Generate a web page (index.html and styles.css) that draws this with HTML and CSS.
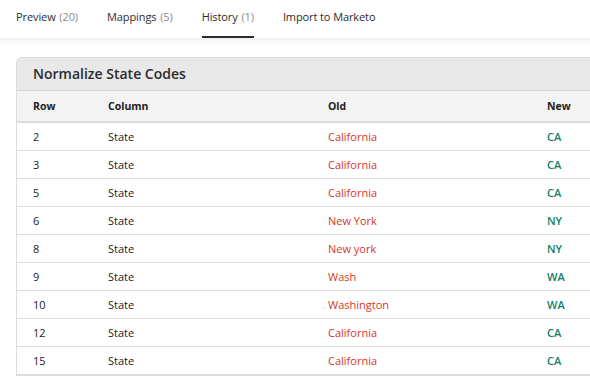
FILE: index.html
```html
<!DOCTYPE html>
<html>
<head>
<meta charset="utf-8">
<link rel="stylesheet" href="styles.css">
</head>
<body>
<nav class="tabs">
  <div class="tab">Preview <span class="count">(20)</span></div>
  <div class="tab">Mappings <span class="count">(5)</span></div>
  <div class="tab active">History <span class="count">(1)</span></div>
  <div class="tab">Import to Marketo</div>
</nav>
<main class="content">
  <section class="card">
    <h2 class="card-title">Normalize State Codes</h2>
    <table class="grid">
      <thead>
        <tr><th class="c-row">Row</th><th class="c-col">Column</th><th class="c-old">Old</th><th class="c-new">New</th></tr>
      </thead>
      <tbody>
        <tr><td>2</td><td>State</td><td class="old">California</td><td class="new">CA</td></tr>
        <tr><td>3</td><td>State</td><td class="old">California</td><td class="new">CA</td></tr>
        <tr><td>5</td><td>State</td><td class="old">California</td><td class="new">CA</td></tr>
        <tr><td>6</td><td>State</td><td class="old">New York</td><td class="new">NY</td></tr>
        <tr><td>8</td><td>State</td><td class="old">New york</td><td class="new">NY</td></tr>
        <tr><td>9</td><td>State</td><td class="old">Wash</td><td class="new">WA</td></tr>
        <tr><td>10</td><td>State</td><td class="old">Washington</td><td class="new">WA</td></tr>
        <tr><td>12</td><td>State</td><td class="old">California</td><td class="new">CA</td></tr>
        <tr><td>15</td><td>State</td><td class="old">California</td><td class="new">CA</td></tr>
      </tbody>
    </table>
  </section>
</main>
</body>
</html>
```
FILE: styles.css
```css
html, body {
  margin: 0;
  padding: 0;
  background: #ffffff;
  overflow: hidden;
}
body {
  font-family: "Open Sans", "Noto Sans", sans-serif;
  font-size: 11px;
  color: #222;
  width: 590px;
  height: 380px;
}
.tabs {
  display: flex;
  gap: 29px;
  padding: 0 16px;
  height: 38px;
  background: #fff;
  box-sizing: border-box;
}
.tab {
  display: flex;
  align-items: center;
  height: 38px;
  padding-bottom: 4px;
  box-sizing: border-box;
  font-size: 11px;
  color: #2c2c2c;
  border-bottom: 2px solid transparent;
  white-space: pre;
  letter-spacing: -0.1px;
}
.tab.active {
  border-bottom-color: #2c2c2c;
}
.count { color: #8a8a8a; margin-left: 1px; }
.content {
  background: linear-gradient(#f1f1f1, #fbfbfb 4px, #ffffff 8px);
  padding: 19px 0 0 16px;
}
.card {
  border: 1px solid #dcdcdc;
  border-right: none;
  border-radius: 6px 0 0 0;
  overflow: hidden;
  background: #fff;
}
.card-title {
  margin: 0;
  background: #e8e8e8;
  height: 32px;
  line-height: 32px;
  padding-left: 16px;
  font-size: 14px;
  font-weight: 600;
  color: #2c2c2c;
  border-bottom: 1px solid #d6d6d6;
}
.grid {
  border-collapse: collapse;
  width: 600px;
}
.grid th {
  background: #f3f3f3;
  text-align: left;
  font-weight: 700;
  font-size: 10.5px;
  color: #222;
  height: 30px;
  padding: 0 0 0 16px;
  border-bottom: 2px solid #dadada;
}
.grid td {
  height: 27px;
  padding: 0 0 0 16px;
  border-bottom: 1px solid #dcdcdc;
  font-size: 11px;
}
.c-row { width: 59px; }
.c-col { width: 204px; }
.c-old { width: 203px; }
.old { color: #d9352a; }
.new { color: #11806a; font-weight: 600; }
```
